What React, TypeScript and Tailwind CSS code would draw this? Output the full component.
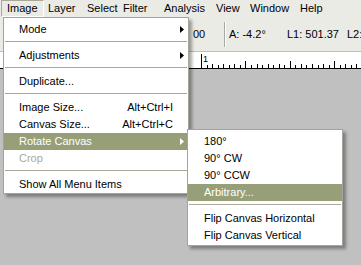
import React from "react";

const font = { fontFamily: '"Liberation Sans", Arial, sans-serif' };

function Arrow({ white }: { white?: boolean }) {
  return (
    <svg width="4" height="7" viewBox="0 0 4 7" className="absolute right-[4px] top-[5px]">
      <polygon points="0,0 4,3.5 0,7" fill={white ? "#ffffff" : "#000000"} />
    </svg>
  );
}

function Item({
  label,
  shortcut,
  arrow,
  active,
  disabled,
  pl,
}: {
  label: string;
  shortcut?: string;
  arrow?: boolean;
  active?: boolean;
  disabled?: boolean;
  pl: string;
}) {
  return (
    <div
      className={`relative flex h-[17px] items-center leading-[17px] ${pl} pr-[15px] ${
        active ? "bg-[#969f78] text-white" : disabled ? "text-[#aca899]" : "text-black"
      }`}
    >
      <span className="flex-1 whitespace-nowrap">{label}</span>
      {shortcut && <span className="whitespace-nowrap">{shortcut}</span>}
      {arrow && <Arrow white={active} />}
    </div>
  );
}

function Sep() {
  return (
    <div className="h-[9px] pt-[3px] px-[1px]">
      <div className="h-[1px] bg-[#aca899]" />
    </div>
  );
}

function Ruler() {
  const ticks: React.ReactNode[] = [];
  const start = 201;
  const step = 5.55;
  for (let i = 0; i < 30; i++) {
    const x = Math.round(start + i * step) + 0.5;
    if (x > 361) break;
    let h = 3;
    if (i % 8 === 0) h = i === 0 ? 14 : 7;
    else if (i % 2 === 0) h = 4;
    ticks.push(<line key={i} x1={x} x2={x} y1={16 - h} y2={16} stroke="#000" strokeWidth={1} />);
  }
  return (
    <svg width="361" height="16" className="block">
      {ticks}
      <text x="203" y="10" fontSize="9" fontFamily="Liberation Sans, Arial, sans-serif" fill="#000">
        1
      </text>
    </svg>
  );
}

export default function App() {
  return (
    <div
      className="relative flex h-[265px] w-[361px] flex-col overflow-hidden bg-[#c0c0c0] text-[11px] text-black"
      style={font}
    >
      {/* menu bar */}
      <div className="flex h-[17px] shrink-0 items-stretch bg-[#ebebe6] pl-[1px] leading-[15px]">
        <div className="w-[43px] shrink-0 border border-b-white border-l-[#aca899] border-r-white border-t-[#aca899] pl-[5px]">
          Image
        </div>
        <div className="w-[39px] shrink-0 pl-[4px] leading-[17px]">Layer</div>
        <div className="w-[36px] shrink-0 pl-[4px] leading-[17px]">Select</div>
        <div className="w-[41px] shrink-0 pl-[4px] leading-[17px]">Filter</div>
        <div className="w-[52px] shrink-0 pl-[4px] leading-[17px]">Analysis</div>
        <div className="w-[34px] shrink-0 pl-[4px] leading-[17px]">View</div>
        <div className="w-[50px] shrink-0 pl-[4px] leading-[17px]">Window</div>
        <div className="shrink-0 pl-[4px] leading-[17px]">Help</div>
      </div>

      {/* toolbar */}
      <div className="flex h-[34px] shrink-0 items-center overflow-hidden whitespace-nowrap bg-[#ebebe6] pl-[193px]">
        <span className="w-[31px] shrink-0">00</span>
        <div className="flex h-[25px] w-[2px] shrink-0">
          <div className="w-[1px] bg-[#a8a8a4]" />
          <div className="w-[1px] bg-white" />
        </div>
        <span className="ml-[3px] w-[58px] shrink-0">A: -4.2°</span>
        <span className="w-[60px] shrink-0">L1: 501.37</span>
        <span className="shrink-0">L2:</span>
      </div>

      {/* ruler */}
      <div className="mt-[1px] h-[17px] shrink-0 border-b border-black bg-white">
        <Ruler />
      </div>

      <div className="flex-1 bg-[#c0c0c0]" />

      {/* main menu */}
      <div className="absolute left-[3px] top-[17px] w-[186px] border border-[#a5a49c] bg-white pt-[3px] shadow-[3px_3px_3px_rgba(0,0,0,0.35)]">
        <Item pl="pl-[15px]" label="Mode" arrow />
        <Sep />
        <Item pl="pl-[15px]" label="Adjustments" arrow />
        <Sep />
        <Item pl="pl-[15px]" label="Duplicate..." />
        <Sep />
        <Item pl="pl-[15px]" label="Image Size..." shortcut="Alt+Ctrl+I" />
        <Item pl="pl-[15px]" label="Canvas Size..." shortcut="Alt+Ctrl+C" />
        <Item pl="pl-[15px]" label="Rotate Canvas" arrow active />
        <Item pl="pl-[15px]" label="Crop" disabled />
        <Sep />
        <Item pl="pl-[15px]" label="Show All Menu Items" />
      </div>

      {/* submenu */}
      <div className="absolute left-[187px] top-[129px] w-[156px] border border-[#a5a49c] bg-white pb-[1px] pt-[3px] shadow-[3px_3px_3px_rgba(0,0,0,0.35)]">
        <Item pl="pl-[16px]" label="180°" />
        <Item pl="pl-[16px]" label="90° CW" />
        <Item pl="pl-[16px]" label="90° CCW" />
        <Item pl="pl-[16px]" label="Arbitrary..." active />
        <Sep />
        <Item pl="pl-[16px]" label="Flip Canvas Horizontal" />
        <Item pl="pl-[16px]" label="Flip Canvas Vertical" />
      </div>
    </div>
  );
}
